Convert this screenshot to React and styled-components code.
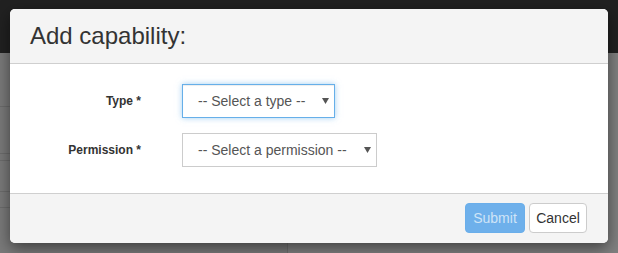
import React from "react";
import styled, { createGlobalStyle } from "styled-components";

const Global = createGlobalStyle`
  html, body { margin: 0; padding: 0; }
  body {
    width: 618px;
    height: 253px;
    overflow: hidden;
    font-family: "Liberation Sans", Arial, sans-serif;
    font-size: 14px;
    color: #333;
    background: #808080;
  }
  * { box-sizing: border-box; }
`;

const Page = styled.div`
  position: relative;
  width: 618px;
  height: 253px;
  display: flex;
  flex-direction: column;
`;

const Navbar = styled.div`
  height: 53px;
  background: #212121;
  flex: none;
`;

const Content = styled.div`
  flex: 1;
  display: flex;
`;

const Sidebar = styled.div`
  width: 288px;
  background: #7a7a7a;
  border-right: 1px solid #6e6e6e;
  display: flex;
  flex-direction: column;
`;

const SideRow = styled.div`
  height: ${(p) => p.$h}px;
  border-bottom: 1px solid #6c6c6c;
  flex: none;
`;

const Main = styled.div`
  flex: 1;
  background: #808080;
`;

const Modal = styled.div`
  position: absolute;
  top: 9px;
  left: 10px;
  width: 598px;
  height: 234px;
  border-radius: 5px;
  background: #fff;
  overflow: hidden;
  box-shadow: 0 5px 15px rgba(0, 0, 0, 0.5);
  display: flex;
  flex-direction: column;
`;

const Header = styled.div`
  height: 55px;
  flex: none;
  background: #f4f4f4;
  border-bottom: 1px solid #cfcfcf;
  display: flex;
  align-items: center;
  padding: 0 20px;
`;

const Title = styled.h4`
  margin: 0;
  font-size: 24px;
  font-weight: normal;
  line-height: 1.1;
  color: #333;
`;

const Body = styled.div`
  flex: none;
  height: 129px;
  padding: 20px 20px 0;
  display: grid;
  grid-template-columns: 111px auto;
  column-gap: 41px;
  row-gap: 15px;
  align-content: start;
  background: #fff;
`;

const Label = styled.label`
  font-size: 12px;
  font-weight: bold;
  color: #333;
  text-align: right;
  align-self: center;
  padding-bottom: 1px;
`;

const Select = styled.div`
  justify-self: start;
  height: 34px;
  display: inline-flex;
  align-items: center;
  padding: 0 5px 0 15px;
  background: #fff;
  border: 1px solid ${(p) => (p.$focus ? "#66afe9" : "#ccc")};
  box-shadow: ${(p) =>
    p.$focus
      ? "inset 0 1px 1px rgba(0,0,0,.075), 0 0 6px rgba(102,175,233,.6)"
      : "none"};
  font-size: 14px;
  color: #555;
  white-space: nowrap;
`;

const Arrow = styled.svg`
  margin-left: 17px;
  width: 7px;
  height: 6px;
  flex: none;
`;

const Footer = styled.div`
  flex: 1;
  background: #f4f4f4;
  border-top: 1px solid #cfcfcf;
  display: flex;
  align-items: center;
  justify-content: flex-end;
  gap: 4px;
  padding: 0 21px 1px 0;
`;

const Button = styled.button`
  height: 30px;
  width: ${(p) => p.$w}px;
  border-radius: 4px;
  font-family: "Liberation Sans", Arial, sans-serif;
  font-size: 14px;
  padding: 0;
  border: 1px solid ${(p) => (p.$primary ? "#6aaeea" : "#ccc")};
  background: ${(p) => (p.$primary ? "#6eb0eb" : "#fff")};
  color: ${(p) => (p.$primary ? "#cfe4f7" : "#333")};
`;

const Caret = () => (
  <Arrow viewBox="0 0 7 6">
    <path d="M0 0 L7 0 L3.5 6 Z" fill="#555" />
  </Arrow>
);

export default function App() {
  return (
    <>
      <Global />
      <Page>
        <Navbar />
        <Content>
          <Sidebar>
            <SideRow $h={54} />
            <SideRow $h={47} />
            <SideRow $h={7} />
            <SideRow $h={31} />
            <SideRow $h={16} />
          </Sidebar>
          <Main />
        </Content>
        <Modal>
          <Header>
            <Title>Add capability:</Title>
          </Header>
          <Body>
            <Label>Type *</Label>
            <Select $focus>
              -- Select a type --
              <Caret />
            </Select>
            <Label>Permission *</Label>
            <Select>
              -- Select a permission --
              <Caret />
            </Select>
          </Body>
          <Footer>
            <Button $primary $w={60} disabled>
              Submit
            </Button>
            <Button $w={58}>Cancel</Button>
          </Footer>
        </Modal>
      </Page>
    </>
  );
}
